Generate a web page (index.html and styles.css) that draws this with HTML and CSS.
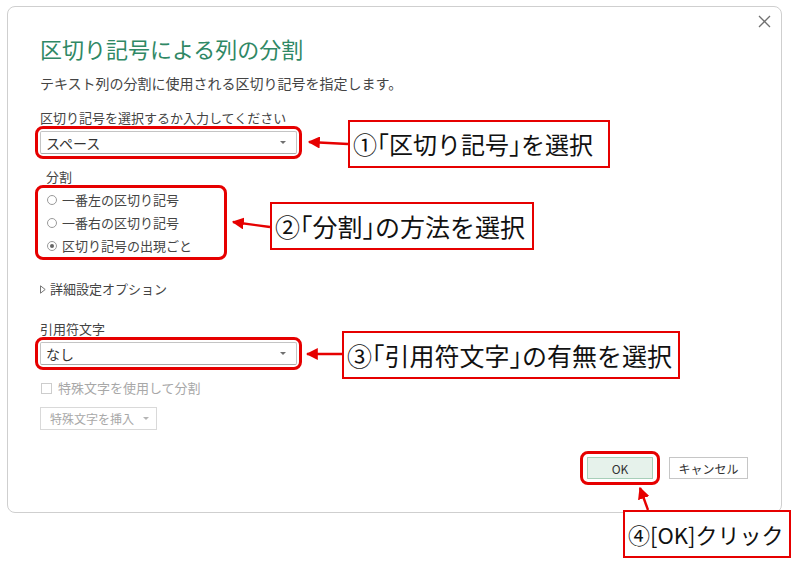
FILE: index.html
```html
<!DOCTYPE html>
<html lang="ja">

<head>
    <meta charset="UTF-8">
    <meta name="viewport" content="width=device-width, initial-scale=1.0">
    <title>区切り記号による列の分割</title>
    <link rel="stylesheet" href="styles.css">
</head>

<body>
    <div class="page">
        <div class="dialog">
            <div class="dialog-header">
                <h1 class="title">区切り記号による列の分割</h1>
                <button class="close" aria-label="閉じる">
                    <svg width="13" height="13" viewBox="0 0 13 13">
                        <path d="M1 1L12 12M12 1L1 12" stroke="#707070" stroke-width="1.3" fill="none" />
                    </svg>
                </button>
            </div>
            <p class="subtitle">テキスト列の分割に使用される区切り記号を指定します。</p>

            <label class="field-label">区切り記号を選択するか入力してください</label>
            <div class="mark mark-select">
                <div class="select"><span>スペース</span><i class="caret"></i></div>
            </div>

            <div class="group-label">分割</div>
            <div class="mark mark-radios">
                <div class="radio"><span class="dot"></span>一番左の区切り記号</div>
                <div class="radio"><span class="dot"></span>一番右の区切り記号</div>
                <div class="radio"><span class="dot checked"></span>区切り記号の出現ごと</div>
            </div>

            <div class="advanced">
                <svg width="6" height="9" viewBox="0 0 6 9">
                    <path d="M0.5 0.8L5.2 4.5L0.5 8.2Z" stroke="#777" stroke-width="1" fill="none" />
                </svg>
                詳細設定オプション
            </div>

            <label class="field-label quote-label">引用符文字</label>
            <div class="mark mark-select">
                <div class="select"><span>なし</span><i class="caret"></i></div>
            </div>

            <div class="check"><span class="box"></span>特殊文字を使用して分割</div>
            <button class="insert-btn" disabled>特殊文字を挿入<i class="caret light"></i></button>

            <div class="footer">
                <div class="mark mark-ok"><button class="btn btn-ok">OK</button></div>
                <button class="btn btn-cancel">キャンセル</button>
            </div>
        </div>

        <!-- annotations -->
        <svg class="arrows" width="800" height="569" viewBox="0 0 800 569">
            <defs>
                <marker id="head" viewBox="0 0 10 10" refX="9" refY="5" markerWidth="5" markerHeight="5" orient="auto">
                    <path d="M0 0L10 5L0 10Z" fill="#e60000" />
                </marker>
            </defs>
            <g stroke="#e60000" stroke-width="2.4" fill="none" marker-end="url(#head)">
                <path d="M348 144L309 142" />
                <path d="M270 227L233 222" />
                <path d="M342 354L307 354" />
                <path d="M648 510L640 488" />
            </g>
        </svg>
        <div class="callout c1">①「区切り記号」を選択</div>
        <div class="callout c2">②「分割」の方法を選択</div>
        <div class="callout c3">③「引用符文字」の有無を選択</div>
        <div class="callout c4">④[OK]クリック</div>
    </div>
</body>

</html>
```

FILE: styles.css
```css
* {
    box-sizing: border-box;
}

body {
    margin: 0;
    background: #fff;
    color: #333;
    font-family: "Noto Sans CJK JP", "Noto Sans", sans-serif;
}

.page {
    position: relative;
    width: 800px;
    height: 569px;
    overflow: hidden;
    padding: 6px 0 0 7px;
}

.dialog {
    width: 775px;
    height: 507px;
    border: 1px solid #cfcfcf;
    border-radius: 8px;
    padding: 8px 10px 33px 32px;
    display: flex;
    flex-direction: column;
    align-items: flex-start;
}

.dialog-header {
    align-self: stretch;
    display: flex;
    justify-content: space-between;
    align-items: flex-start;
}

.title {
    margin: 19px 0 0;
    font-size: 22px;
    line-height: 28px;
    font-weight: normal;
    color: #2f8865;
}

.close {
    width: 13px;
    height: 13px;
    padding: 0;
    border: 0;
    background: none;
    display: block;
}

.close svg {
    display: block;
}

.subtitle {
    margin: 11px 0 0;
    font-size: 14px;
    line-height: 20px;
    color: #444;
}

.field-label {
    display: block;
    margin-top: 16px;
    font-size: 13px;
    line-height: 18px;
    color: #444;
}

.quote-label {
    margin-top: 22px;
}

/* red highlight around a control, kept out of the flow with negative margins */
.mark {
    border: 3px solid #e60000;
    border-radius: 8px;
    padding: 2px;
    margin: -1px -5px 0;
}

.select {
    width: 257px;
    height: 23px;
    border: 1px solid #c4c4c4;
    border-bottom-color: #a9a9a9;
    border-radius: 2px;
    background: #fff;
    display: flex;
    align-items: center;
    justify-content: space-between;
    padding: 0 10px 0 5px;
    font-size: 14px;
    color: #333;
}

.caret {
    width: 0;
    height: 0;
    border-left: 3px solid transparent;
    border-right: 3px solid transparent;
    border-top: 3px solid #707070;
}

.caret.light {
    border-top-color: #b5b5b5;
}

.group-label {
    margin: 9px 0 0 6px;
    font-size: 13px;
    line-height: 18px;
    color: #444;
}

.mark-radios {
    width: 192px;
    padding: 0 0 0 9px;
}

.radio {
    height: 23px;
    display: flex;
    align-items: center;
    font-size: 13px;
    color: #444;
}

.dot {
    width: 10px;
    height: 10px;
    border: 1px solid #9a9a9a;
    border-radius: 50%;
    margin-right: 5px;
    display: flex;
    align-items: center;
    justify-content: center;
}

.dot.checked::after {
    content: "";
    width: 4px;
    height: 4px;
    border-radius: 50%;
    background: #666;
}

.advanced {
    margin-top: 20px;
    display: flex;
    align-items: center;
    gap: 4px;
    font-size: 13px;
    line-height: 18px;
    color: #444;
}

.check {
    margin: 9px 0 0 1px;
    display: flex;
    align-items: center;
    gap: 6px;
    font-size: 13px;
    line-height: 18px;
    color: #a8a8a8;
}

.check .box {
    width: 11px;
    height: 11px;
    border: 1px solid #cdcdcd;
}

.insert-btn {
    margin-top: 10px;
    width: 117px;
    height: 23px;
    border: 1px solid #d9d9d9;
    background: #fff;
    padding: 0 0 0 9px;
    display: flex;
    align-items: center;
    gap: 9px;
    font-family: inherit;
    font-size: 12px;
    color: #a8a8a8;
}

.footer {
    align-self: stretch;
    margin-top: auto;
    display: flex;
    justify-content: flex-end;
    align-items: center;
    gap: 16px;
    padding-right: 23px;
}

.mark-ok {
    margin: -6px -7px;
    padding: 3px 4px;
}

.btn {
    display: block;
    height: 22px;
    padding: 0;
    border: 1px solid #c6c6c6;
    background: #fff;
    font-family: inherit;
    font-size: 12px;
    color: #333;
}

.btn-ok {
    width: 66px;
    background: #e6f2eb;
    border-color: #a7cfb9;
}

.btn-cancel {
    width: 79px;
}

.arrows {
    position: absolute;
    left: 0;
    top: 0;
    pointer-events: none;
}

.callout {
    position: absolute;
    height: 48px;
    border: 2px solid #e60000;
    background: #fff;
    display: flex;
    align-items: center;
    padding-left: 3px;
    font-size: 24px;
    line-height: 1;
    color: #111;
    white-space: nowrap;
    font-feature-settings: "halt";
}

.c1 {
    left: 348px;
    top: 120px;
    width: 262px;
}

.c2 {
    left: 270px;
    top: 202px;
    width: 264px;
    font-size: 25px;
}

.c3 {
    left: 342px;
    top: 331px;
    width: 338px;
    font-size: 25px;
}

.c4 {
    left: 623px;
    top: 510px;
    width: 168px;
    font-size: 22px;
}
```
